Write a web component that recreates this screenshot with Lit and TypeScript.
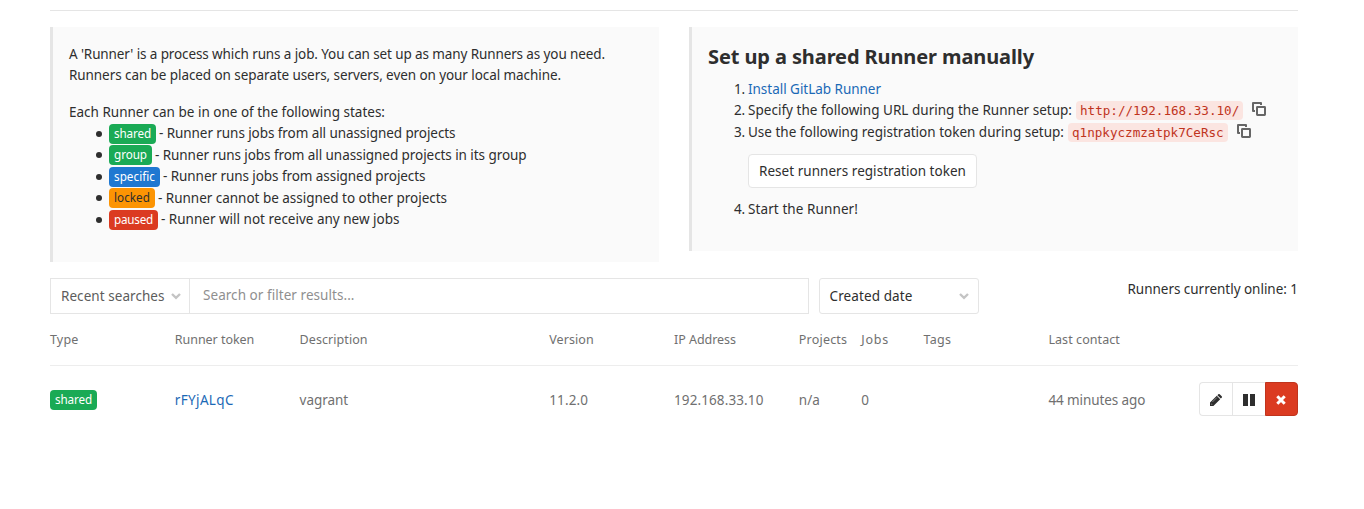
import { LitElement, html, css } from "lit";
import { customElement, property } from "lit/decorators.js";

/** One line of text whose tracking is computed so that it spans a given width. */
@customElement("fit-text")
class FitText extends LitElement {
  @property({ type: Number }) span = 0;
  @property() text = "";
  static styles = css`
    :host { display: inline-block; white-space: pre; }
    .run { display: inline-block; white-space: pre; }
  `;
  render() {
    return html`<span class="run">${this.text}</span>`;
  }
  updated() {
    const run = this.renderRoot.querySelector(".run") as HTMLElement;
    run.style.letterSpacing = "0px";
    const natural = run.getBoundingClientRect().width;
    run.style.letterSpacing = `${(this.span - natural) / this.text.length}px`;
  }
}

const fit = (text: string, span: number) => html`<fit-text .text=${text} .span=${span}></fit-text>`;

const chevron = html`<svg class="chevron" width="10" height="7" viewBox="0 0 10 7">
  <path d="M1 1 L5 4.8 L9 1" fill="none" stroke="#c4c4c4" stroke-width="2.4" /></svg>`;

const copyIcon = html`<svg class="copy" width="14" height="14" viewBox="0 0 14 14">
  <path d="M3 9H1V1H9V3" fill="none" stroke="#666" stroke-width="2" stroke-linejoin="round" />
  <rect x="5" y="5" width="8" height="8" rx=".4" fill="none" stroke="#666" stroke-width="2" /></svg>`;

const states = [
  { name: "shared", kind: "green", label: 37, text: "- Runner runs jobs from all unassigned projects", span: 296.5 },
  { name: "group", kind: "green", label: 33, text: "- Runner runs jobs from all unassigned projects in its group", span: 371.5 },
  { name: "specific", kind: "blue", label: 41, text: "- Runner runs jobs from assigned projects", span: 262.5 },
  { name: "locked", kind: "orange", label: 36, text: "- Runner cannot be assigned to other projects", span: 289 },
  { name: "paused", kind: "red", label: 39, text: "- Runner will not receive any new jobs", span: 238.5 },
];

const badge = (name: string, kind: string, label: number) =>
  html`<span class="badge ${kind}">${fit(name, label)}</span>`;

@customElement("app-root")
class AppRoot extends LitElement {
  static styles = css`
    :host {
      display: block; box-sizing: border-box; height: 509px; padding: 10px 66px 0 50px;
      background: #fff; color: #2e2e2e; overflow: hidden;
      font: 13.5px/21px "Noto Sans", "Open Sans", sans-serif;
    }
    * { box-sizing: border-box; }
    .rule { height: 1px; background: #e5e5e5; margin-bottom: 16px; }
    .panels { display: grid; grid-template-columns: 609px 609px; gap: 30px; align-items: start; }
    .panel { background: #fafafa; border-left: 3px solid #e5e5e5; padding: 16px; }
    .about { height: 235px; padding-top: 17px; }
    .setup { height: 224px; }
    .line { height: 21px; display: flex; white-space: nowrap; }
    .gap { margin: 16px 0 -1px; }
    .state { height: 21.5px; padding: 1.5px 0 0 27px; display: flex; align-items: flex-start; }
    .bullet { width: 6px; height: 6px; border-radius: 50%; background: #2e2e2e; margin: 7px 7px 0 0; flex: none; }
    .state .note { line-height: 20px; margin: -0.5px 0 0 3px; }
    .badge {
      height: 20px; padding: 0 5px; border-radius: 4px; color: #fff; font-size: 11.7px;
      line-height: 18px; display: inline-block; flex: none; white-space: nowrap;
    }
    .green { background: #1aaa55; }
    .blue { background: #1f78d1; }
    .orange { background: #fc9403; color: #2e2e2e; }
    .red { background: #db3b21; }
    h4 { margin: 0; font-size: 20px; line-height: 28px; height: 35.5px; font-weight: 700; }
    .step { display: flex; height: 21.5px; padding-left: 26px; white-space: nowrap; }
    .num { width: 14px; flex: none; }
    .link { color: #1b69b6; }
    code {
      font: 12.6px/19px "DejaVu Sans Mono", monospace; color: #c0341d; background: #fbe5e1;
      border-radius: 4px; padding: 0 4px; height: 19px; margin: 1px 0 0 4px;
    }
    .copy { margin: 2px 0 0 9px; flex: none; }
    button { font: inherit; color: inherit; cursor: pointer; }
    .reset {
      display: flex; align-items: center; justify-content: center; width: 229px; height: 34px;
      margin: 11px 0 10.5px 40px; padding: 0; background: #fff; border: 1px solid #e5e5e5; border-radius: 4px;
    }
    .filters { display: flex; height: 36px; margin-top: 16px; }
    .recent {
      width: 140px; border: 1px solid #e5e5e5; display: flex; align-items: center; background: #fff;
      color: #5c5c5c; padding: 0 8px 0 10px; justify-content: space-between;
    }
    .search { width: 619px; border: 1px solid #e5e5e5; border-left: 0; color: #8f8f8f; padding: 6px 13px; }
    .sort {
      width: 160px; margin-left: 10px; border: 1px solid #e5e5e5; border-radius: 3px; display: flex;
      align-items: center; justify-content: space-between; padding: 0 9px 0 9.5px; background: #fff;
    }
    .online { margin-left: auto; line-height: 22px; }
    .grid {
      display: grid;
      grid-template-columns: 10fr 10fr 20fr 10fr 10fr 5fr 5fr 10fr 10fr 10fr; color: #707070;
    }
    .head { height: 52px; border-bottom: 1px solid #ededed; line-height: 51px; font-size: 12.5px; }
    .row { height: 68px; align-items: center; }
    .row .badge { display: block; width: 47px; }
    .actions { display: flex; justify-content: flex-end; margin-bottom: 2px; }
    .act {
      width: 33px; height: 34px; padding: 0; background: #fff; border: 1px solid #e5e5e5; border-right: 0;
      display: flex; align-items: center; justify-content: center;
    }
    .act svg { margin-top: 2px; }
    .act.pause svg { margin-top: 1px; }
    .edit { border-radius: 4px 0 0 4px; }
    .remove { background: #db3b21; border: 1px solid #c0341d; border-radius: 0 4px 4px 0; }
  `;

  render() {
    return html`
      <div class="rule"></div>
      <div class="panels">
        <section class="panel about">
          <div class="line">${fit("A 'Runner' is a process which runs a job. You can set up as many Runners as you need.", 536)}</div>
          <div class="line">${fit("Runners can be placed on separate users, servers, even on your local machine.", 492)}</div>
          <div class="line gap">${fit("Each Runner can be in one of the following states:", 316)}</div>
          ${states.map(
            (s) => html`<div class="state"><i class="bullet"></i>${badge(s.name, s.kind, s.label)}<span class="note">${fit(s.text, s.span)}</span></div>`
          )}
        </section>
        <section class="panel setup">
          <h4>${fit("Set up a shared Runner manually", 326)}</h4>
          <div class="step"><span class="num">${fit("1.", 11)}</span><a class="link">${fit("Install GitLab Runner", 133)}</a></div>
          <div class="step"><span class="num">${fit("2.", 11)}</span>${fit("Specify the following URL during the Runner setup:", 324)}<code>http://192.168.33.10/</code>${copyIcon}</div>
          <div class="step"><span class="num">${fit("3.", 11)}</span>${fit("Use the following registration token during setup:", 316)}<code>q1npkyczmzatpk7CeRsc</code>${copyIcon}</div>
          <button class="reset">${fit("Reset runners registration token", 207)}</button>
          <div class="step"><span class="num">${fit("4.", 11)}</span>${fit("Start the Runner!", 110)}</div>
        </section>
      </div>
      <div class="filters">
        <button class="recent">${fit("Recent searches", 103.5)}${chevron}</button>
        <div class="search">${fit("Search or filter results...", 151.5)}</div>
        <button class="sort">${fit("Created date", 83)}${chevron}</button>
        <span class="online">${fit("Runners currently online: 1", 170.5)}</span>
      </div>
      <div class="grid head">
        <span>${fit("Type", 28.5)}</span><span>${fit("Runner token", 79.5)}</span><span>${fit("Description", 68)}</span>
        <span>${fit("Version", 44.5)}</span><span>${fit("IP Address", 62)}</span><span>${fit("Projects", 48.5)}</span>
        <span>${fit("Jobs", 28)}</span><span>${fit("Tags", 27.5)}</span><span>${fit("Last contact", 71.5)}</span><span></span>
      </div>
      <div class="grid row">
        <span>${badge("shared", "green", 37)}</span><span class="link">${fit("rFYjALqC", 59)}</span>
        <span>${fit("vagrant", 48.5)}</span><span>${fit("11.2.0", 39)}</span><span>${fit("192.168.33.10", 89.5)}</span>
        <span>${fit("n/a", 21)}</span><span>${fit("0", 8)}</span><span></span><span>${fit("44 minutes ago", 97)}</span>
        <span class="actions">
          <button class="act edit" aria-label="Edit"><svg width="12" height="12" viewBox="0 0 12 12">
            <path d="M0 12V8.6L6.8 1.8L10.2 5.2L3.4 12Z M7.4 1.2L8.3.3Q9-.2 9.7.3L11.7 2.3Q12.3 3 11.7 3.7L10.8 4.6Z" fill="#2e2e2e" />
            <path d="M1 9.5L2.5 11H1.8V10.2H1Z" fill="#fff" /><path d="M2.4 8L6.8 3.6" stroke="#fff" stroke-width=".4" /></svg></button>
          <button class="act pause" aria-label="Pause"><svg width="12" height="12" viewBox="0 0 12 12">
            <path d="M0 0H5V12H0ZM7 0H12V12H7Z" fill="#2e2e2e" /></svg></button>
          <button class="act remove" aria-label="Remove"><svg width="10" height="10" viewBox="0 0 10 10">
            <path d="M1.3 1.3L8.7 8.7M8.7 1.3L1.3 8.7" stroke="#fff" stroke-width="3" /></svg></button>
        </span>
      </div>`;
  }
}
